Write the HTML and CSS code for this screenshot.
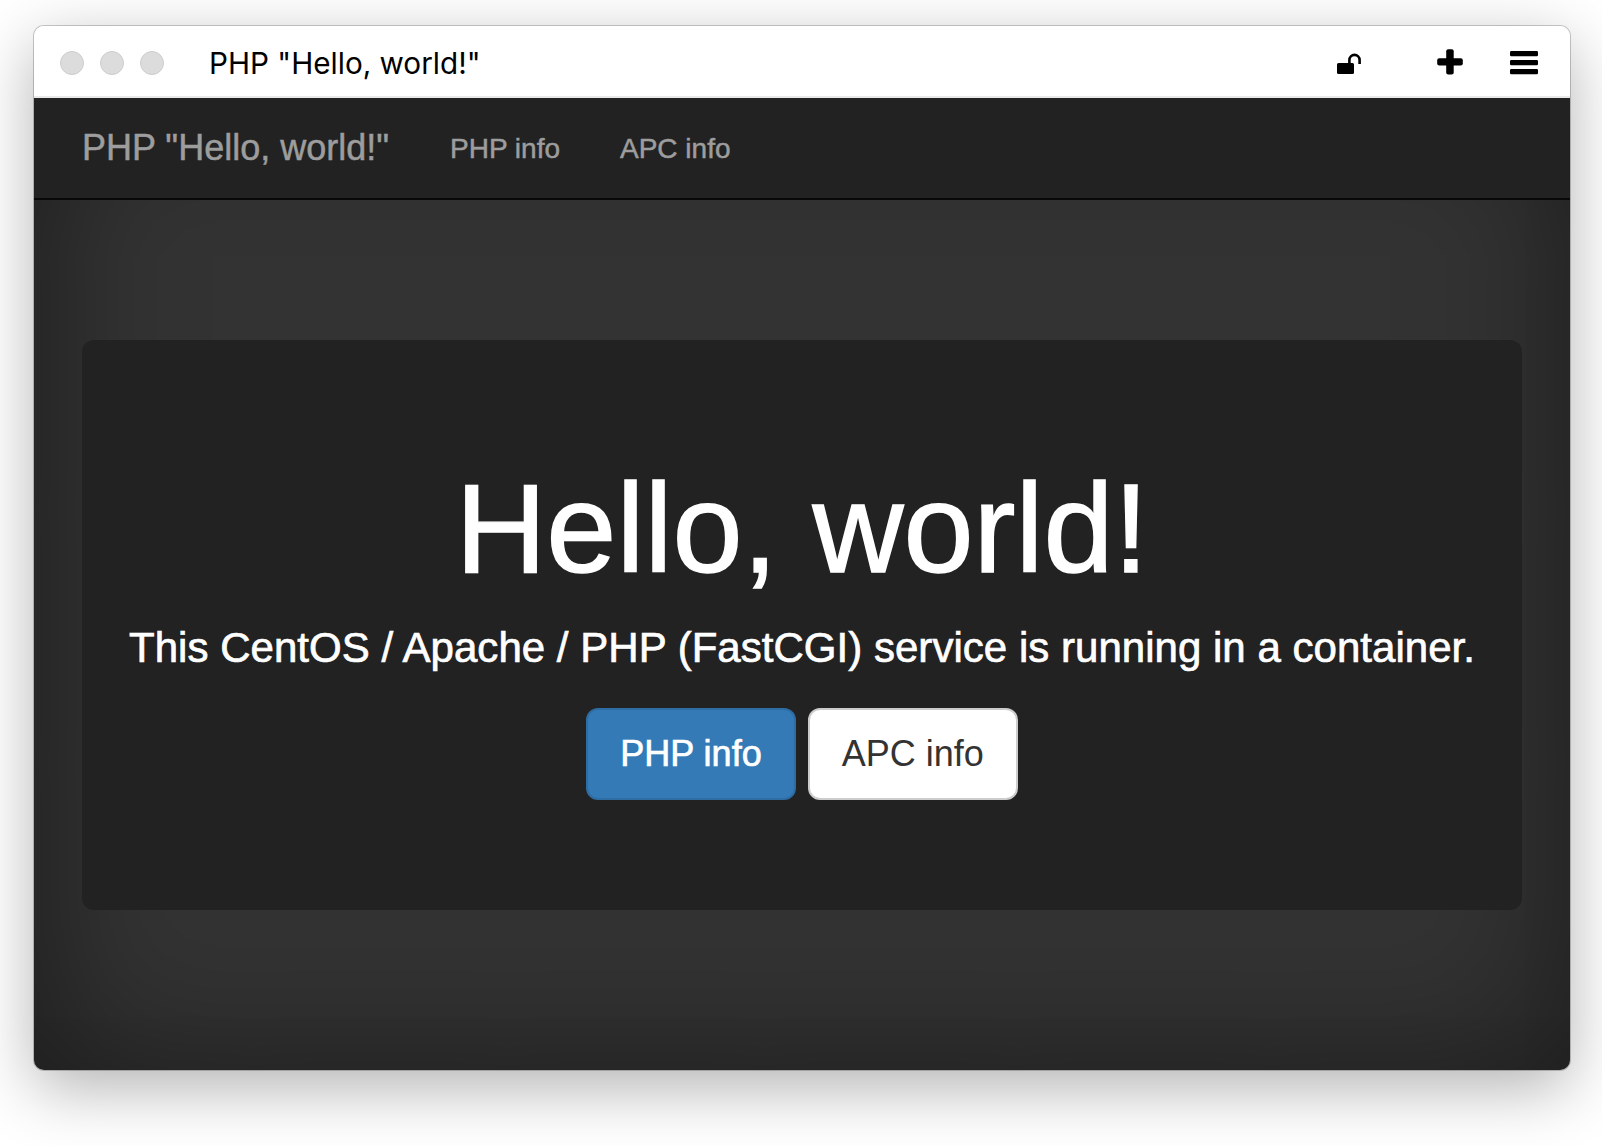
FILE: index.html
```html
<!DOCTYPE html>
<html lang="en">
<head>
<meta charset="utf-8">
<title>PHP "Hello, world!"</title>
<link rel="stylesheet" href="styles.css">
</head>
<body>
<div class="window">
  <header class="titlebar">
    <div class="dots"><i></i><i></i><i></i></div>
    <div class="title">PHP "Hello, world!"</div>
    <div class="tools">
      <svg class="lock" width="26" height="22" viewBox="0 0 26 22"><rect x="0" y="10" width="17" height="11" rx="1.5"/><path d="M12.4 11V7a5.1 5.1 0 0 1 10.2 0v4" fill="none" stroke="#000" stroke-width="2.6"/></svg>
      <svg class="plus" width="26" height="26" viewBox="0 0 26 26"><rect x="9.2" y="0.2" width="7.5" height="25.4" rx="2"/><rect x="0.2" y="9.2" width="25.6" height="7.2" rx="2"/></svg>
      <svg class="menu" width="28" height="24" viewBox="0 0 28 24"><rect y="0" width="28" height="5.3" rx="1.3"/><rect y="9" width="28" height="5.3" rx="1.3"/><rect y="18" width="28" height="5.3" rx="1.3"/></svg>
    </div>
  </header>
  <div class="page">
    <nav class="navbar">
      <a class="brand">PHP "Hello, world!"</a>
      <a class="link">PHP info</a>
      <a class="link">APC info</a>
    </nav>
    <main class="jumbotron">
      <h1>Hello, world!</h1>
      <p class="lead">This CentOS / Apache / PHP (FastCGI) service is running in a container.</p>
      <div class="buttons">
        <a class="btn primary">PHP info</a>
        <a class="btn">APC info</a>
      </div>
    </main>
  </div>
</div>
</body>
</html>
```
FILE: styles.css
```css
* { box-sizing: border-box; }
body {
  margin: 0;
  padding: 26px 32px 0 34px;
  height: 1146px;
  overflow: hidden;
  background: #fff;
  font-family: "Liberation Sans", Arial, sans-serif;
}
.window {
  width: 1536px;
  height: 1044px;
  display: flex;
  flex-direction: column;
  border-radius: 10px;
  box-shadow: 0 0 0 1px rgba(0, 0, 0, .2), 0 18px 64px rgba(0, 0, 0, .3);
}
.titlebar {
  height: 72px;
  display: flex;
  align-items: center;
  padding: 0 32px 0 26px;
  background: #fff;
  border-bottom: 2px solid #e9e9e9;
  border-radius: 10px 10px 0 0;
}
.dots { display: flex; gap: 16px; padding-top: 3px; }
.dots i {
  width: 24px;
  height: 24px;
  border-radius: 50%;
  background: #dcdcdc;
  border: 1px solid #cdcdcd;
}
.title {
  margin-left: 45px;
  padding-top: 4px;
  font: 29.7px/36px Inter, sans-serif;
  white-space: nowrap;
  color: #000;
}
.tools { display: flex; align-items: flex-start; margin-left: auto; height: 24px; }
.lock { margin: 4px 74px 0 0; }
.plus { margin: 0 47px 0 0; }
.menu { margin-top: 2px; }
.page {
  flex: 1;
  background: #333;
  border-radius: 0 0 10px 10px;
  box-shadow: inset 0 0 150px rgba(0, 0, 0, .5);
}
.navbar {
  height: 102px;
  display: flex;
  align-items: center;
  padding-left: 48px;
  background: #222;
  border-bottom: 2px solid #080808;
  color: #9d9d9d;
  white-space: nowrap;
  -webkit-text-stroke: .5px currentColor;
}
.brand { font-size: 36px; margin-right: 61px; }
.link { font-size: 28px; margin-right: 60px; padding-top: 2px; }
.jumbotron {
  margin: 140px 48px 0;
  height: 570px;
  padding-top: 120px;
  border-radius: 12px;
  background: #222;
  color: #fff;
  text-align: center;
}
h1 {
  margin: 0 0 20px;
  font-size: 126px;
  font-weight: 400;
  line-height: 1.1;
  -webkit-text-stroke: 1.4px currentColor;
}
.lead {
  margin: 0 0 31px;
  font-size: 42px;
  line-height: 1.4;
  letter-spacing: .03px;
  white-space: nowrap;
  -webkit-text-stroke: .7px currentColor;
}
.buttons { display: flex; justify-content: center; gap: 12px; }
.btn {
  padding: 20px 32px;
  border: 2px solid #ccc;
  border-radius: 12px;
  background: #fff;
  color: #333;
  font-size: 36px;
  line-height: 48px;
}
.btn.primary { background: #337ab7; border-color: #2e6da4; color: #fff; -webkit-text-stroke: .7px currentColor; }
```
